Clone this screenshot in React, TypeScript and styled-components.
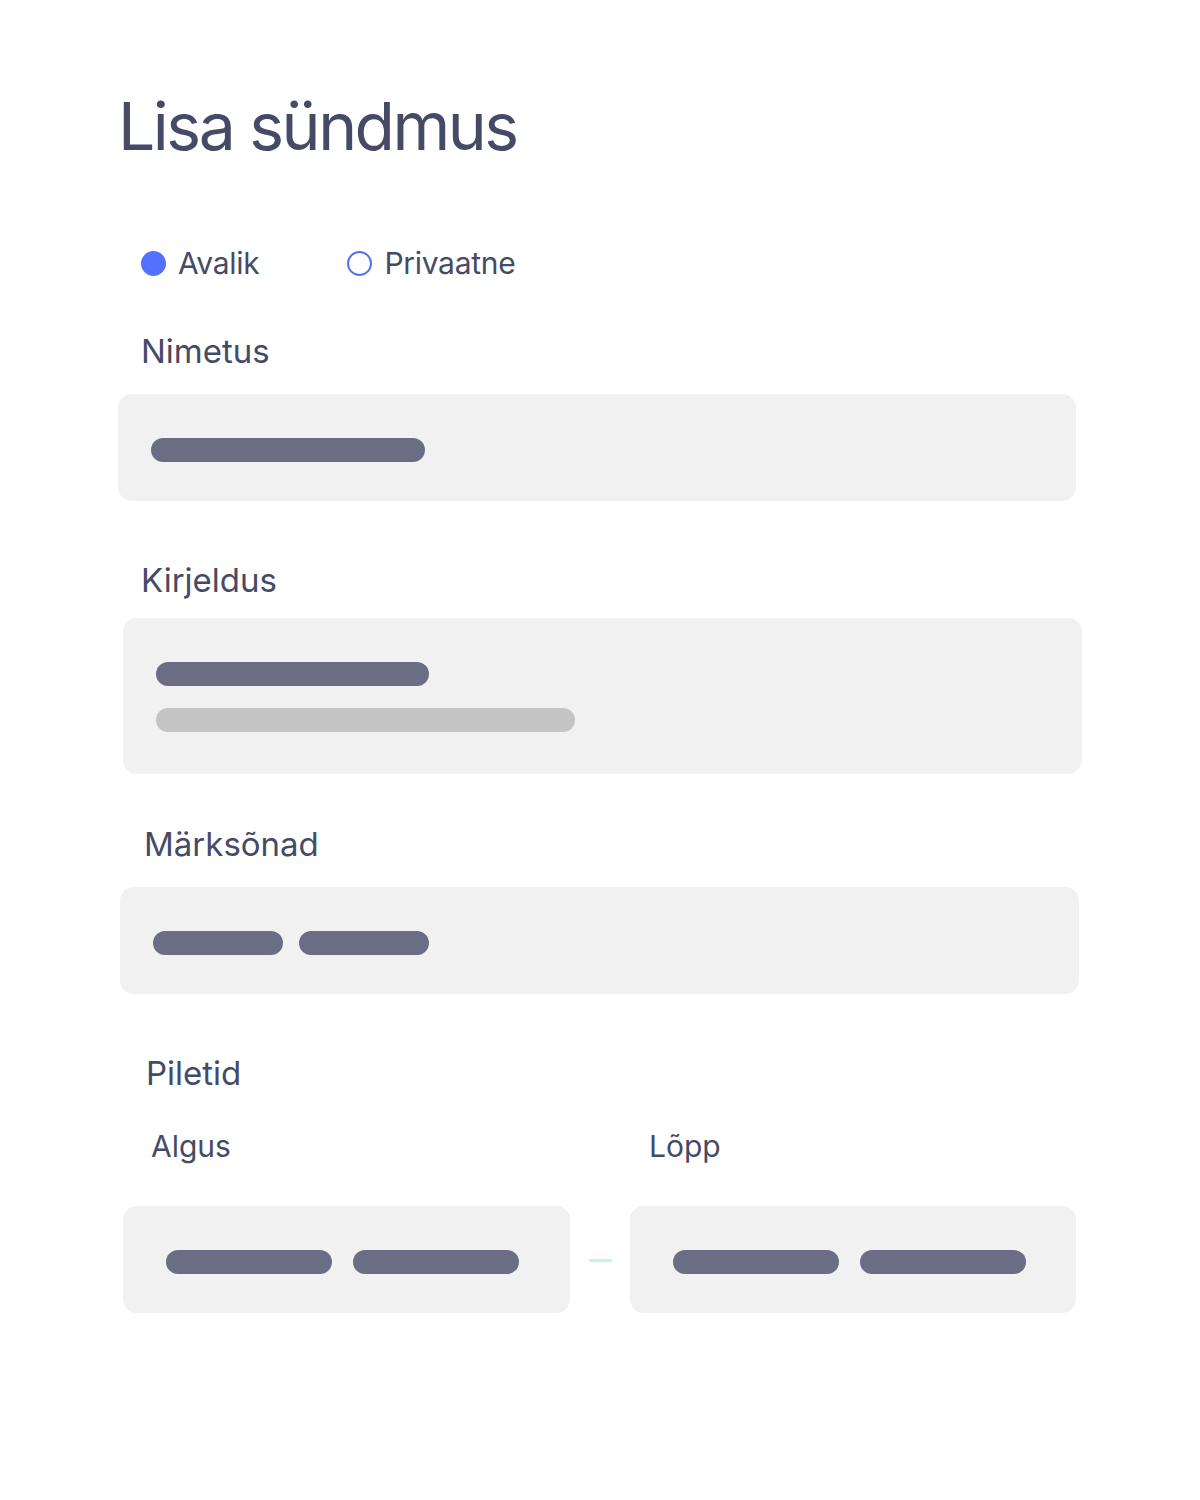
import React from 'react'
import styled, { createGlobalStyle } from 'styled-components'

const GlobalStyle = createGlobalStyle`
  body {
    margin: 0;
    background: #fff;
    font-family: Inter, "Noto Sans", sans-serif;
    color: #454b66;
  }
`

const Page = styled.div`
  width: 1200px;
  height: 1500px;
  padding: 86px 0 0 118px;
  box-sizing: border-box;
  display: flex;
  flex-direction: column;
`

const Title = styled.h1`
  margin: 0;
  font-size: 66px;
  font-weight: 400;
  line-height: 80px;
  letter-spacing: -2.5px;
`

const RadioRow = styled.div`
  display: flex;
  align-items: center;
  gap: 88px;
  margin: 77px 0 0 23px;
`

const RadioOption = styled.label`
  display: flex;
  align-items: center;
  gap: 12px;
  font-size: 30px;
  line-height: 40px;
  letter-spacing: -0.3px;
`

const Dot = styled.span<{ checked?: boolean }>`
  width: 25px;
  height: 25px;
  border-radius: 50%;
  box-sizing: border-box;
  background: ${p => (p.checked ? '#5271ff' : '#fff')};
  border: 2px solid #5271ff;
`

const Field = styled.div<{ top: number; shift: number }>`
  margin: ${p => p.top}px 0 0 ${p => p.shift}px;
  display: flex;
  flex-direction: column;
`

const Label = styled.div<{ indent: number; size?: number }>`
  padding-left: ${p => p.indent}px;
  font-size: ${p => p.size ?? 33}px;
  line-height: 40px;
`

const Box = styled.div<{ height: number; width: number; top?: number }>`
  width: ${p => p.width}px;
  height: ${p => p.height}px;
  margin-top: ${p => p.top ?? 0}px;
  box-sizing: border-box;
  background: #f1f1f1;
  border-radius: 14px;
  padding: 44px 33px 0;
  display: flex;
  flex-direction: column;
  gap: 22px;
`

const BarRow = styled.div<{ gap: number }>`
  display: flex;
  gap: ${p => p.gap}px;
`

const Bar = styled.div<{ width: number; light?: boolean }>`
  width: ${p => p.width}px;
  height: 24px;
  border-radius: 12px;
  background: ${p => (p.light ? '#c4c4c4' : '#6b6d85')};
`

const DateRow = styled.div`
  display: flex;
  align-items: center;
  margin-top: 40px;
`

const DateBox = styled(Box)`
  padding: 44px 43px 0;
`

const Dash = styled.div`
  width: 23px;
  height: 3px;
  background: #c8f0f8;
  margin: 2px 18px 0 19px;
`

const SubLabels = styled.div`
  display: flex;
  margin-top: 33px;
`

const App: React.FC = () => (
  <>
    <GlobalStyle />
    <Page>
      <Title>Lisa sündmus</Title>
      <RadioRow>
        <RadioOption>
          <Dot checked />
          Avalik
        </RadioOption>
        <RadioOption>
          <Dot />
          Privaatne
        </RadioOption>
      </RadioRow>

      <Field top={48} shift={0}>
        <Label indent={23}>Nimetus</Label>
        <Box width={958} height={107} top={23}>
          <Bar width={274} />
        </Box>
      </Field>

      <Field top={59} shift={5}>
        <Label indent={18}>Kirjeldus</Label>
        <Box width={959} height={156} top={18}>
          <Bar width={273} />
          <Bar width={419} light />
        </Box>
      </Field>

      <Field top={50} shift={2}>
        <Label indent={24}>Märksõnad</Label>
        <Box width={959} height={107} top={23}>
          <BarRow gap={16}>
            <Bar width={130} />
            <Bar width={130} />
          </BarRow>
        </Box>
      </Field>

      <Field top={59} shift={5}>
        <Label indent={23}>Piletid</Label>
        <SubLabels>
          <Label indent={28} size={30} style={{ width: 498 }}>
            Algus
          </Label>
          <Label indent={-1} size={30}>
            Lõpp
          </Label>
        </SubLabels>
        <DateRow>
          <DateBox width={447} height={107}>
            <BarRow gap={21}>
              <Bar width={166} />
              <Bar width={166} />
            </BarRow>
          </DateBox>
          <Dash />
          <DateBox width={446} height={107}>
            <BarRow gap={21}>
              <Bar width={166} />
              <Bar width={166} />
            </BarRow>
          </DateBox>
        </DateRow>
      </Field>
    </Page>
  </>
)

export default App
